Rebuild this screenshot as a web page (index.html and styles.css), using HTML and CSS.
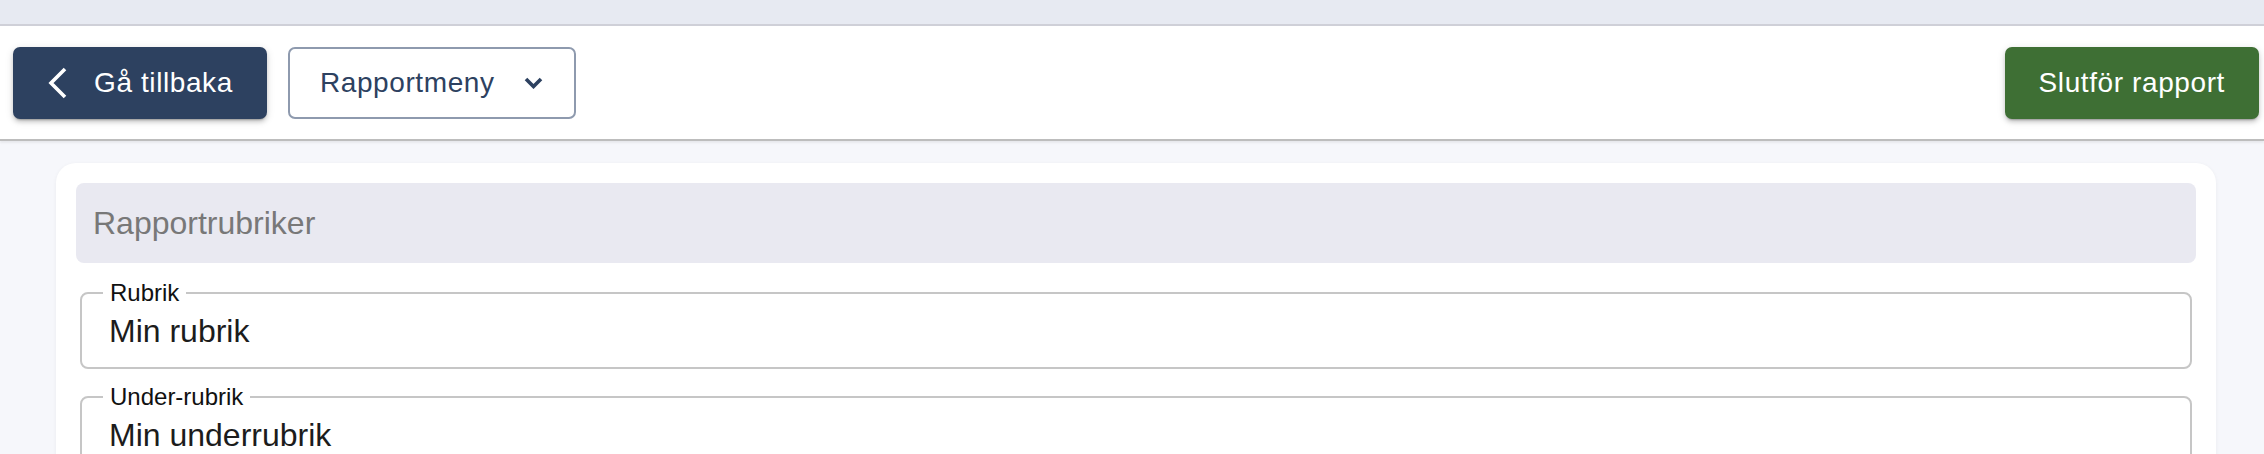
FILE: index.html
```html
<!DOCTYPE html>
<html lang="sv">
<head>
<meta charset="utf-8">
<title>Rapport</title>
<link rel="stylesheet" href="styles.css">
</head>
<body>
<div class="topband"></div>
<header class="toolbar">
  <div class="toolbar-left">
    <button class="btn btn-back" type="button">
      <svg class="icon-back" width="19" height="32" viewBox="0 0 19 32" aria-hidden="true"><polyline points="17,2 3,16 17,30" fill="none" stroke="#ffffff" stroke-width="3.6" stroke-linecap="butt" stroke-linejoin="miter"/></svg>
      <span>Gå tillbaka</span>
    </button>
    <button class="btn btn-menu" type="button">
      <span>Rapportmeny</span>
      <svg class="icon-down" width="19" height="12" viewBox="0 0 19 12" aria-hidden="true"><polyline points="2,2 9.5,9.5 17,2" fill="none" stroke="#2d4160" stroke-width="3.6" stroke-linecap="butt" stroke-linejoin="miter"/></svg>
    </button>
  </div>
  <button class="btn btn-finish" type="button">Slutför rapport</button>
</header>
<main class="content">
  <section class="card">
    <div class="section-head">Rapportrubriker</div>
    <fieldset class="field">
      <legend>Rubrik</legend>
      <div class="field-value">Min rubrik</div>
    </fieldset>
    <fieldset class="field">
      <legend>Under-rubrik</legend>
      <div class="field-value">Min underrubrik</div>
    </fieldset>
  </section>
</main>
</body>
</html>
```
FILE: styles.css
```css
html, body {
  margin: 0;
  padding: 0;
}
body {
  background: #f6f7fb;
  font-family: "Liberation Sans", Arial, sans-serif;
  overflow: hidden;
}
.topband {
  height: 24px;
  background: #e7eaf2;
  border-bottom: 2px solid #cfd0d8;
}
.toolbar {
  height: 113px;
  background: #ffffff;
  border-bottom: 2px solid #bdbdbd;
  box-shadow: 0 2px 2px rgba(0, 0, 0, 0.06);
  display: flex;
  align-items: center;
  justify-content: space-between;
  padding: 0 5px 0 13px;
  position: relative;
  z-index: 1;
}
.toolbar-left {
  display: flex;
  align-items: center;
  gap: 21px;
}
.btn {
  height: 72px;
  box-sizing: border-box;
  border-radius: 7px;
  font-family: "Liberation Sans", Arial, sans-serif;
  font-size: 28px;
  letter-spacing: 0.6px;
  display: flex;
  align-items: center;
  border: none;
  cursor: pointer;
}
.btn-back {
  background: #2d4160;
  color: #ffffff;
  padding: 0 34px 0 35px;
  gap: 27px;
  box-shadow: 0 3px 2px -2px rgba(0,0,0,0.25), 0 3px 4px 0 rgba(0,0,0,0.14), 0 2px 8px 0 rgba(0,0,0,0.12);
}
.btn-menu {
  background: #ffffff;
  color: #2d4160;
  border: 2px solid #8e9aae;
  padding: 0 31px 0 30px;
  gap: 29px;
}
.btn-finish {
  background: #3e6f34;
  color: #ffffff;
  padding: 0 34px 0 34px;
  box-shadow: 0 3px 2px -2px rgba(0,0,0,0.25), 0 3px 4px 0 rgba(0,0,0,0.14), 0 2px 8px 0 rgba(0,0,0,0.12);
}
.icon-back, .icon-down {
  display: block;
  flex: none;
}
.content {
  padding: 22px 48px 0 56px;
}
.card {
  background: #ffffff;
  border-radius: 20px;
  padding: 20px;
  box-shadow: 0 1px 4px rgba(0, 0, 0, 0.05);
  min-height: 260px;
}
.section-head {
  height: 80px;
  line-height: 80px;
  background: #e9e9f1;
  border-radius: 8px;
  padding-left: 17px;
  font-size: 32px;
  color: #787878;
  margin-bottom: 18px;
}
.field {
  margin: 0 4px 16px;
  border: 2px solid #c6c6c6;
  border-radius: 8px;
  padding: 6px 21px 16px;
  min-width: 0;
}
.field legend {
  font-size: 24px;
  line-height: 24px;
  padding: 0 7px;
  color: #111111;
}
.field-value {
  font-size: 32px;
  line-height: 40px;
  color: #1c1c1c;
  padding-left: 6px;
}
```
